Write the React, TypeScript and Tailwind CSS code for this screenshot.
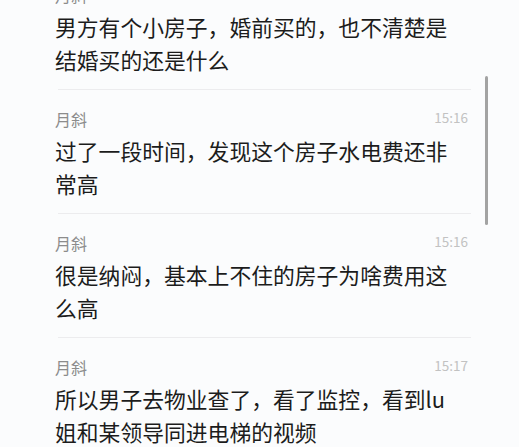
import React from "react";

type Msg = { name: string; time?: string; lines: string[] };

const msgs: Msg[] = [
  { name: "月斜", time: "", lines: ["男方有个小房子，婚前买的，也不清楚是", "结婚买的还是什么"] },
  { name: "月斜", time: "15:16", lines: ["过了一段时间，发现这个房子水电费还非", "常高"] },
  { name: "月斜", time: "15:16", lines: ["很是纳闷，基本上不住的房子为啥费用这", "么高"] },
  { name: "月斜", time: "15:17", lines: ["所以男子去物业查了，看了监控，看到lu", "姐和某领导同进电梯的视频"] },
];

export default function App() {
  return (
    <div
      className="relative w-[519px] h-[447px] overflow-hidden bg-[#fbfcfd]"
      style={{ fontFamily: '"Noto Sans CJK SC", "Noto Sans", sans-serif' }}
    >
      <div className="mt-[-34px] pl-[55px] pr-[48px]">
        {msgs.map((m, i) => (
          <div key={i} className="flex flex-col">
            <div className="pt-[19px] h-[39px] flex items-start justify-between">
              <span className="text-[16px] leading-[20px] text-[#8c8c8c]">{m.name}</span>
              <span className="text-[13.5px] leading-[16px] text-[#c2c2c2] mr-[3px]">{m.time}</span>
            </div>
            <div className="mt-[5px] text-[21.8px] leading-[33px] text-[#1c1c1c] whitespace-nowrap">
              {m.lines.map((l, j) => (
                <div key={j}>{l}</div>
              ))}
            </div>
            <div className="h-[13px]" />
            <div className="ml-[3px] h-px bg-[#ececee]" />
          </div>
        ))}
      </div>
      <div className="absolute left-[485px] top-[76px] w-[3px] h-[149px] rounded-full bg-[#a3a3a3]" />
    </div>
  );
}
